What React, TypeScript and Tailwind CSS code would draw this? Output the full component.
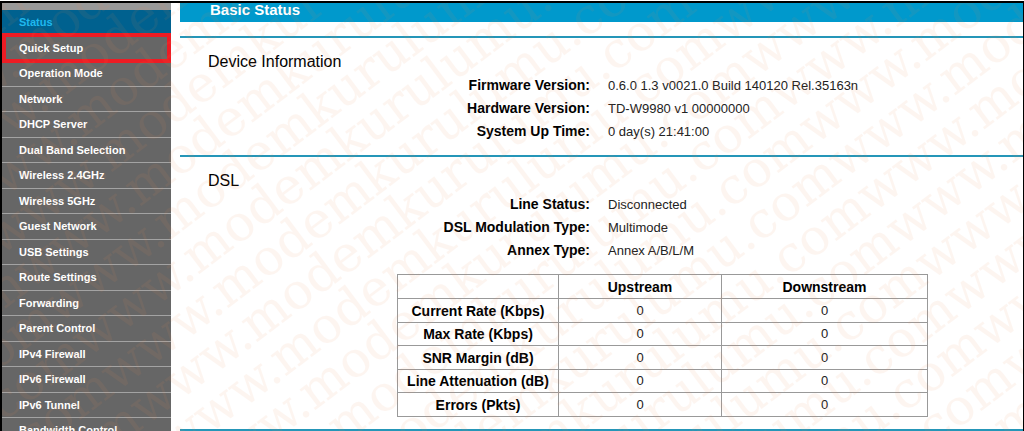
const menu = [
  'Status',
  'Quick Setup',
  'Operation Mode',
  'Network',
  'DHCP Server',
  'Dual Band Selection',
  'Wireless 2.4GHz',
  'Wireless 5GHz',
  'Guest Network',
  'USB Settings',
  'Route Settings',
  'Forwarding',
  'Parent Control',
  'IPv4 Firewall',
  'IPv6 Firewall',
  'IPv6 Tunnel',
  'Bandwidth Control',
];

const deviceInfo = [
  { label: 'Firmware Version:', value: '0.6.0 1.3 v0021.0 Build 140120 Rel.35163n' },
  { label: 'Hardware Version:', value: 'TD-W9980 v1 00000000' },
  { label: 'System Up Time:', value: '0 day(s) 21:41:00' },
];

const dslInfo = [
  { label: 'Line Status:', value: 'Disconnected' },
  { label: 'DSL Modulation Type:', value: 'Multimode' },
  { label: 'Annex Type:', value: 'Annex A/B/L/M' },
];

const rates = [
  { name: 'Current Rate (Kbps)', up: 0, down: 0 },
  { name: 'Max Rate (Kbps)', up: 0, down: 0 },
  { name: 'SNR Margin (dB)', up: 0, down: 0 },
  { name: 'Line Attenuation (dB)', up: 0, down: 0 },
  { name: 'Errors (Pkts)', up: 0, down: 0 },
];

const watermarkRows = Array.from({ length: 23 }, (_, i) => i - 9);

function Watermark() {
  return (
    <svg
      aria-hidden="true"
      className="absolute inset-0 w-full h-full pointer-events-none select-none opacity-[0.08]"
      fill="#f08c50"
      fontFamily="'DejaVu Serif', serif"
      fontSize="50"
    >
      {watermarkRows.map(i => (
        <text key={i} x="-835" transform={`translate(${228 + i * 29} ${304 + i * 34}) rotate(-37)`}>
          {'www.modemkurulumu.com'.repeat(3)}
        </text>
      ))}
    </svg>
  );
}

function Sidebar() {
  return (
    <nav className="w-[169px] shrink-0 bg-[#666666] text-[11px] font-bold text-white">
      <div className="h-[7px] bg-[#999999]" />
      <ul>
        {menu.map(item => (
          <li key={item} className="relative odd:h-[26px] even:h-[25px] border-b border-[#a3a3a3]">
            <a
              href="#"
              className={`flex items-center h-full pl-[17px] ${item === 'Status' ? 'bg-[#00618f] text-[#1fb8ee]' : ''}`}
            >
              {item}
            </a>
            {item === 'Quick Setup' && (
              <span className="absolute inset-x-0 -inset-y-[3px] border-4 border-[#ed1c24] pointer-events-none" />
            )}
          </li>
        ))}
      </ul>
    </nav>
  );
}

function InfoList({ title, rows }: { title: string; rows: { label: string; value: string }[] }) {
  return (
    <>
      <h2 className="pt-3 pl-7 text-base leading-6">{title}</h2>
      <dl className="text-sm leading-[23px]">
        {rows.map(row => (
          <div key={row.label} className="flex gap-[18px]">
            <dt className="w-[410px] shrink-0 text-right font-bold">{row.label}</dt>
            <dd className="text-[13px] text-[#222222]">{row.value}</dd>
          </div>
        ))}
      </dl>
    </>
  );
}

export default function App() {
  return (
    <div className="h-screen overflow-hidden bg-white pt-px font-['Liberation_Sans',Arial,sans-serif]">
      <div className="relative flex h-full overflow-hidden border-t-2 border-l-2 border-r border-black">
        <Sidebar />
        <main className="flex-1 min-w-0 ml-[9px] text-black">
          <h1 className="h-[19px] pl-[30px] bg-[#0099cc] text-[15px] leading-[14px] font-bold text-white">
            Basic Status
          </h1>

          <section className="mt-[14px] h-[119px] border-t-2 border-[#2596b8]">
            <InfoList title="Device Information" rows={deviceInfo} />
          </section>

          <section className="border-y-2 border-[#2596b8]">
            <InfoList title="DSL" rows={dslInfo} />
            <table className="mt-3 mb-3 ml-[217px] w-[531px] table-fixed border-collapse text-center text-sm leading-5 [&_td]:border [&_th]:border [&_td]:border-[#999999] [&_th]:border-[#999999]">
              <thead>
                <tr className="h-6">
                  <th className="w-[161px]" />
                  <th className="w-[163px]">Upstream</th>
                  <th>Downstream</th>
                </tr>
              </thead>
              <tbody>
                {rates.map(rate => (
                  <tr key={rate.name} className="odd:h-6 even:h-[23px]">
                    <th>{rate.name}</th>
                    <td className="text-[13px] text-[#222222]">{rate.up}</td>
                    <td className="text-[13px] text-[#222222]">{rate.down}</td>
                  </tr>
                ))}
              </tbody>
            </table>
          </section>
        </main>
        <Watermark />
      </div>
    </div>
  );
}
